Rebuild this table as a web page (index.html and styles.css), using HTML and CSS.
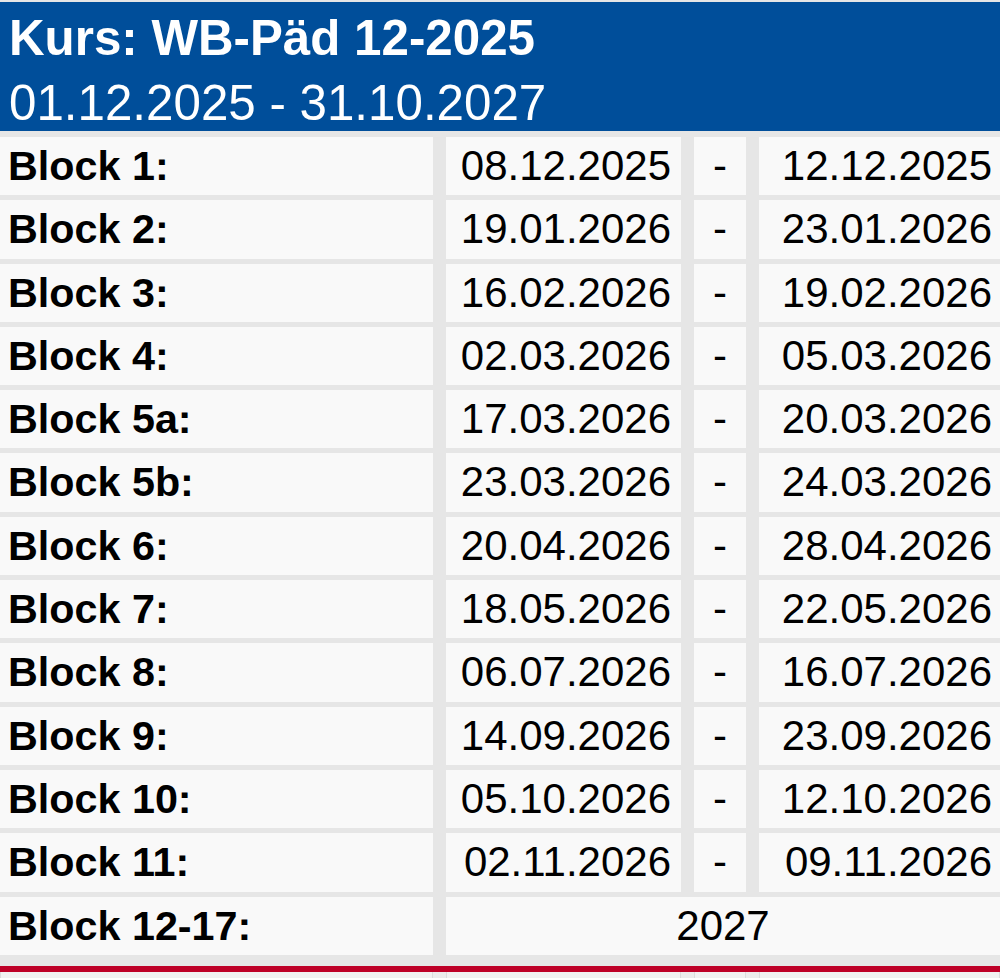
FILE: index.html
```html
<!DOCTYPE html>
<html lang="de">
<head>
<meta charset="utf-8">
<title>Kurs: WB-Päd 12-2025</title>
<link rel="stylesheet" href="styles.css">
</head>
<body>
<div class="page">
  <header class="course">
    <h1 class="course-title">Kurs: WB-Päd 12-2025</h1>
    <p class="course-range">01.12.2025 - 31.10.2027</p>
  </header>
  <div class="blocks">
    <div class="cell label">Block 1:</div><div class="cell date">08.12.2025</div><div class="cell dash">-</div><div class="cell date end">12.12.2025</div>
    <div class="cell label">Block 2:</div><div class="cell date">19.01.2026</div><div class="cell dash">-</div><div class="cell date end">23.01.2026</div>
    <div class="cell label">Block 3:</div><div class="cell date">16.02.2026</div><div class="cell dash">-</div><div class="cell date end">19.02.2026</div>
    <div class="cell label">Block 4:</div><div class="cell date">02.03.2026</div><div class="cell dash">-</div><div class="cell date end">05.03.2026</div>
    <div class="cell label">Block 5a:</div><div class="cell date">17.03.2026</div><div class="cell dash">-</div><div class="cell date end">20.03.2026</div>
    <div class="cell label">Block 5b:</div><div class="cell date">23.03.2026</div><div class="cell dash">-</div><div class="cell date end">24.03.2026</div>
    <div class="cell label">Block 6:</div><div class="cell date">20.04.2026</div><div class="cell dash">-</div><div class="cell date end">28.04.2026</div>
    <div class="cell label">Block 7:</div><div class="cell date">18.05.2026</div><div class="cell dash">-</div><div class="cell date end">22.05.2026</div>
    <div class="cell label">Block 8:</div><div class="cell date">06.07.2026</div><div class="cell dash">-</div><div class="cell date end">16.07.2026</div>
    <div class="cell label">Block 9:</div><div class="cell date">14.09.2026</div><div class="cell dash">-</div><div class="cell date end">23.09.2026</div>
    <div class="cell label">Block 10:</div><div class="cell date">05.10.2026</div><div class="cell dash">-</div><div class="cell date end">12.10.2026</div>
    <div class="cell label">Block 11:</div><div class="cell date">02.11.2026</div><div class="cell dash">-</div><div class="cell date end">09.11.2026</div>
    <div class="cell label">Block 12-17:</div><div class="cell year">2027</div>
  </div>
  <div class="divider"></div>
  <div class="blocks next">
    <div class="cell ghost"></div><div class="cell ghost"></div><div class="cell ghost"></div><div class="cell ghost"></div>
  </div>
</div>
</body>
</html>
```

FILE: styles.css
```css
html, body {
  margin: 0;
  padding: 0;
}

body {
  background: #e6e6e6;
  font-family: "Liberation Sans", Arial, sans-serif;
  color: #000;
}

.page {
  width: 1000px;
  height: 978px;
  overflow: hidden;
  padding-top: 2px;
  box-sizing: border-box;
}

.course {
  background: #004e9a;
  color: #fff;
  height: 129px;
  padding: 3px 0 0 9px;
  box-sizing: border-box;
}

.course-title,
.course-range {
  margin: 0;
  font-size: 49.3px;
  line-height: 65px;
  white-space: nowrap;
}

.course-title {
  font-weight: bold;
}

.course-range {
  font-weight: normal;
}

.blocks {
  margin-top: 6px;
  display: grid;
  grid-template-columns: 433px 235px 52px 1fr;
  grid-auto-rows: 58.3px;
  column-gap: 13px;
  row-gap: 5px;
}

.cell {
  background: #f9f9f9;
  font-size: 42px;
  line-height: 58px;
  white-space: nowrap;
  overflow: hidden;
}

.label {
  font-weight: bold;
  font-size: 41.3px;
  padding-left: 8px;
}

.date {
  text-align: right;
  padding-right: 10px;
}

.date.end {
  padding-right: 8px;
}

.dash {
  text-align: center;
}

.year {
  grid-column: 2 / 5;
  text-align: center;
}

.divider {
  margin-top: 11px;
  height: 6px;
  background: #be0027;
}

.blocks.next {
  margin-top: 0;
  background: #ececec;
}

.ghost {
  background: #f1f1f1;
  box-shadow: inset 1px 0 0 #dcdcdc, inset -1px 0 0 #dcdcdc;
}
```
